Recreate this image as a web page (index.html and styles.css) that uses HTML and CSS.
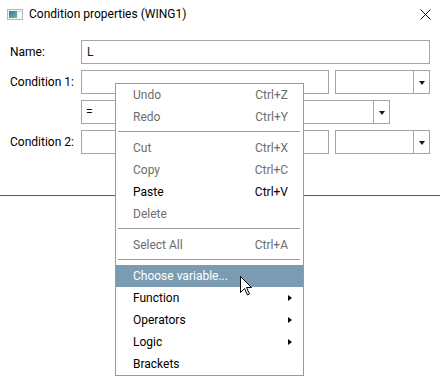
FILE: index.html
```html
<!DOCTYPE html>
<html>
<head>
<meta charset="utf-8">
<link rel="stylesheet" href="styles.css">
</head>
<body>
<div class="dialog">
  <div class="titlebar">
    <svg class="app-icon" width="16" height="11" viewBox="0 0 16 11">
      <defs>
        <linearGradient id="g" x1="0" y1="0" x2="1" y2="1">
          <stop offset="0" stop-color="#3d6fb0"/>
          <stop offset="1" stop-color="#6fbf8a"/>
        </linearGradient>
      </defs>
      <rect x="0.5" y="0.5" width="15" height="10" fill="#f4f4f4" stroke="#b8b8b8"/>
      <rect x="2" y="2" width="8" height="7" fill="url(#g)"/>
      <rect x="11" y="2" width="3" height="7" fill="#ffffff"/>
      <rect x="11" y="2" width="3" height="1" fill="#c8c8c8"/>
    </svg>
    <span class="title">Condition properties (WING1)</span>
    <svg class="close" width="11" height="11" viewBox="0 0 11 11">
      <path d="M0.5 0.5 L10.5 10.5 M10.5 0.5 L0.5 10.5" stroke="#111" stroke-width="1" fill="none"/>
    </svg>
  </div>

  <div class="form">
    <div class="row">
      <span class="lbl">Name:</span>
      <div class="field name">L</div>
    </div>
    <div class="row">
      <span class="lbl">Condition 1:</span>
      <div class="field cond"></div>
      <div class="combo small"><span class="val"></span><span class="btn"><i class="tri"></i></span></div>
    </div>
    <div class="row">
      <span class="lbl"></span>
      <div class="combo op"><span class="val">=</span><span class="btn"><i class="tri"></i></span></div>
    </div>
    <div class="row">
      <span class="lbl">Condition 2:</span>
      <div class="field cond"></div>
      <div class="combo small"><span class="val"></span><span class="btn"><i class="tri"></i></span></div>
    </div>
  </div>

  <div class="rule"></div>

  <div class="menu">
    <div class="item dis"><span>Undo</span><span>Ctrl+Z</span></div>
    <div class="item dis"><span>Redo</span><span>Ctrl+Y</span></div>
    <div class="sep"></div>
    <div class="item dis"><span>Cut</span><span>Ctrl+X</span></div>
    <div class="item dis"><span>Copy</span><span>Ctrl+C</span></div>
    <div class="item"><span>Paste</span><span>Ctrl+V</span></div>
    <div class="item dis"><span>Delete</span><span></span></div>
    <div class="sep"></div>
    <div class="item dis"><span>Select All</span><span>Ctrl+A</span></div>
    <div class="sep"></div>
    <div class="item hot"><span>Choose variable...</span><span></span></div>
    <div class="item sub"><span>Function</span><i class="arrow"></i></div>
    <div class="item sub"><span>Operators</span><i class="arrow"></i></div>
    <div class="item sub"><span>Logic</span><i class="arrow"></i></div>
    <div class="item"><span>Brackets</span><span></span></div>
  </div>

  <svg class="cursor" width="13" height="20" viewBox="0 0 13 20">
    <path d="M0.5 0.5 L0.5 16.5 L4.5 12.5 L7.5 19 L9.5 18 L6.5 11.5 L11.5 11.5 Z" fill="#fff" stroke="#000" stroke-width="1" stroke-linejoin="miter"/>
  </svg>
</div>
</body>
</html>
```

FILE: styles.css
```css
* { box-sizing: border-box; }

html, body {
  margin: 0;
  padding: 0;
  background: #ffffff;
}

body {
  font-family: Roboto, "Liberation Sans", sans-serif;
  font-size: 12px;
  color: #000;
}

.dialog {
  position: relative;
  width: 440px;
  height: 384px;
  background: #ffffff;
  overflow: hidden;
}

.titlebar {
  height: 28px;
  display: flex;
  align-items: center;
}

.app-icon {
  margin-left: 7px;
  flex: none;
}

.title {
  margin-left: 6px;
  color: #000;
}

.close {
  margin-left: auto;
  margin-right: 9px;
  flex: none;
}

.form {
  margin-top: 12px;
  padding-left: 10px;
  display: flex;
  flex-direction: column;
  gap: 6px;
}

.row {
  display: flex;
  align-items: center;
  height: 24px;
}

.lbl {
  width: 71px;
  flex: none;
}

.field {
  height: 24px;
  border: 1px solid #a5a5a5;
  padding-left: 5px;
  display: flex;
  align-items: center;
  color: #1a1a1a;
}

.field.name { width: 349px; }
.field.cond { width: 248px; margin-right: 6px; }

.combo {
  height: 24px;
  border: 1px solid #a5a5a5;
  display: flex;
}

.combo.small { width: 95px; }
.combo.op { width: 309px; }

.combo .val {
  flex: 1;
  display: flex;
  align-items: center;
  padding-left: 4px;
}

.combo .btn {
  width: 16px;
  border-left: 1px solid #a5a5a5;
  display: flex;
  align-items: center;
  justify-content: center;
  padding-top: 2px;
}

.tri {
  width: 0;
  height: 0;
  border-left: 3.5px solid transparent;
  border-right: 3.5px solid transparent;
  border-top: 4px solid #1a1a1a;
}

.rule {
  margin-top: 41px;
  height: 1px;
  background: #5a5a5a;
}

.menu {
  position: absolute;
  left: 115px;
  top: 83px;
  width: 189px;
  border: 1px solid #8a9bab;
  background: #ffffff;
}

.item {
  height: 22px;
  display: flex;
  align-items: center;
  justify-content: space-between;
  padding: 0 15px 0 17px;
  color: #000;
}

.item.dis { color: #6d6d6d; }

.item.hot {
  background: #7b9bb3;
  color: #ffffff;
}

.item.sub { padding-right: 11px; }

.arrow {
  width: 0;
  height: 0;
  border-top: 3.5px solid transparent;
  border-bottom: 3.5px solid transparent;
  border-left: 4px solid #000;
}

.sep {
  height: 9px;
  padding-top: 3px;
}

.sep::before {
  content: "";
  display: block;
  height: 1px;
  margin: 0 3px 0 2px;
  background: #9c9c9c;
}

.cursor {
  position: absolute;
  left: 240px;
  top: 276px;
}
```
